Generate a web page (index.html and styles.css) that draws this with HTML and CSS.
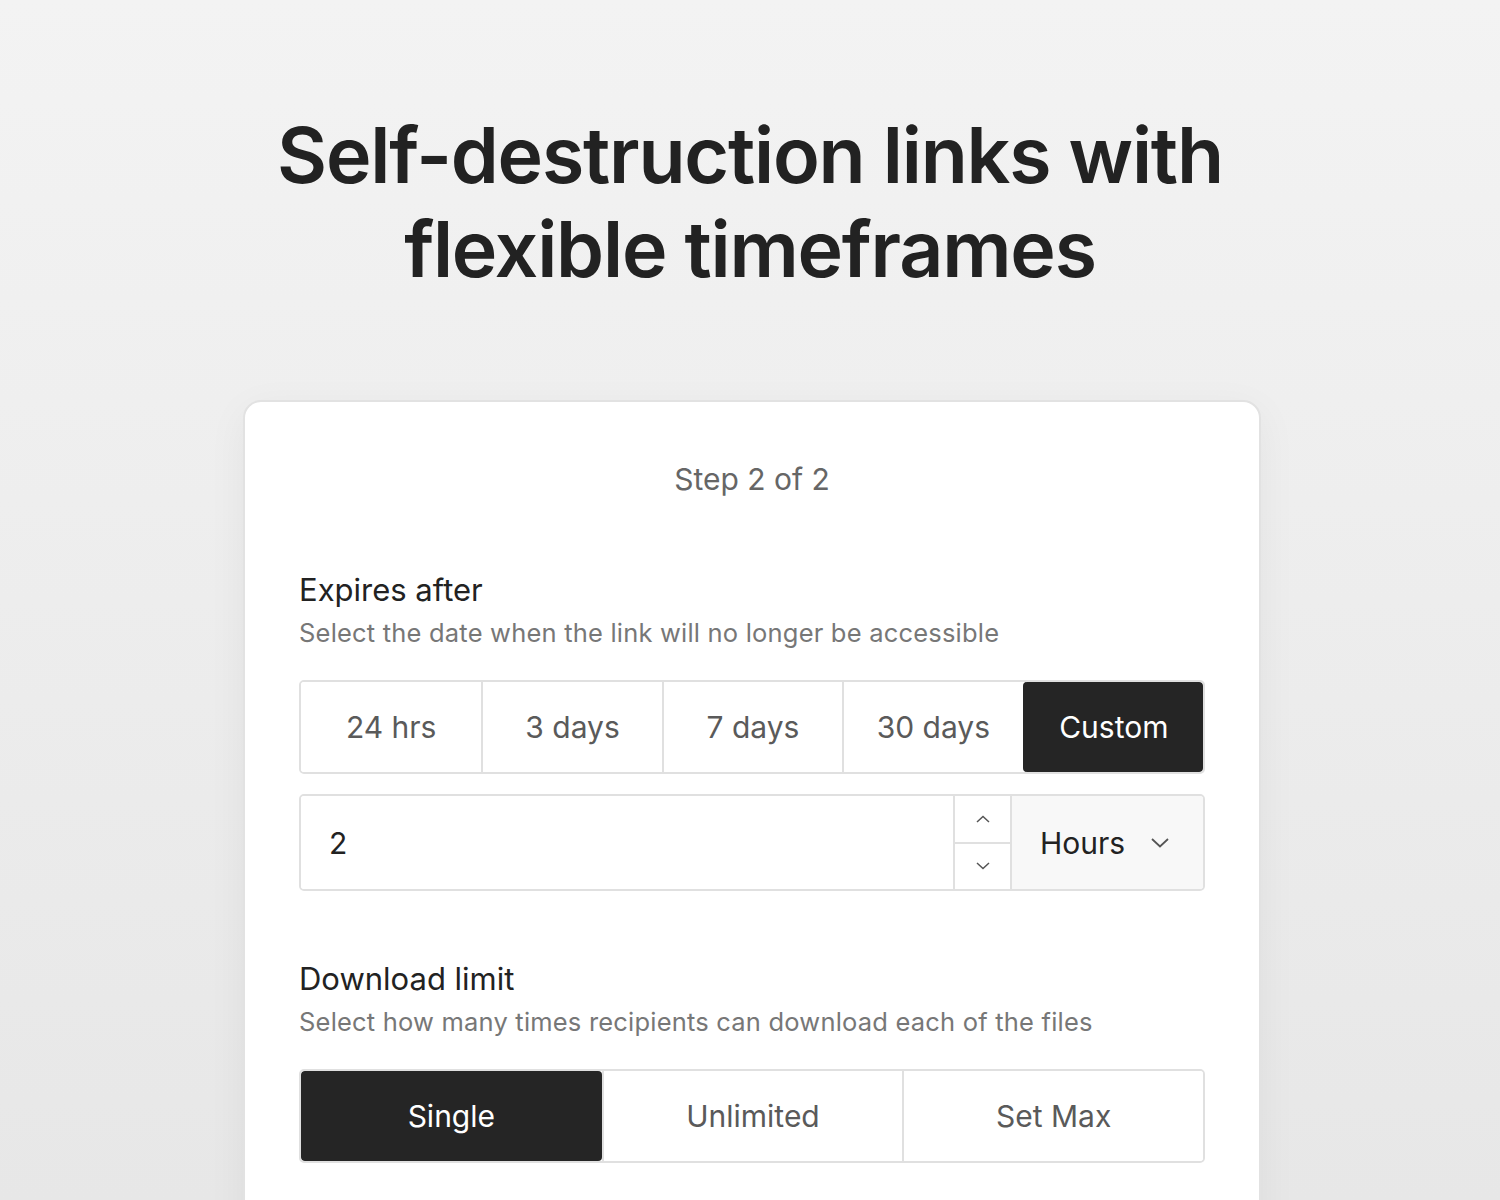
FILE: index.html
```html
<!DOCTYPE html>
<html lang="en">
<head>
  <meta charset="UTF-8" />
  <title>Self-destruction links</title>
  <meta name="viewport" content="width=device-width, initial-scale=1.0" />
  <link rel="stylesheet" href="styles.css">
</head>
<body>
  <h1 class="headline">Self-destruction links with<br>flexible timeframes</h1>

  <div class="card">
    <div class="step">Step 2 of 2</div>

    <div class="field">
      <div class="label">Expires after</div>
      <div class="hint">Select the date when the link will no longer be accessible</div>
      <div class="segments five">
        <button class="seg">24 hrs</button>
        <button class="seg">3 days</button>
        <button class="seg">7 days</button>
        <button class="seg">30 days</button>
        <button class="seg active">Custom</button>
      </div>
      <div class="custom-row">
        <input class="num" type="text" value="2" />
        <div class="spinner">
          <button class="spin">
            <svg width="14" height="8" viewBox="0 0 14 8"><path d="M1 7 L7 1.5 L13 7" fill="none" stroke="#555" stroke-width="1.5"/></svg>
          </button>
          <button class="spin">
            <svg width="14" height="8" viewBox="0 0 14 8"><path d="M1 1 L7 6.5 L13 1" fill="none" stroke="#555" stroke-width="1.5"/></svg>
          </button>
        </div>
        <div class="unit">
          <span>Hours</span>
          <svg width="18" height="10" viewBox="0 0 18 10"><path d="M1 1 L9 8.5 L17 1" fill="none" stroke="#555" stroke-width="1.8"/></svg>
        </div>
      </div>
    </div>

    <div class="field">
      <div class="label">Download limit</div>
      <div class="hint">Select how many times recipients can download each of the files</div>
      <div class="segments three">
        <button class="seg active">Single</button>
        <button class="seg">Unlimited</button>
        <button class="seg">Set Max</button>
      </div>
    </div>
  </div>
</body>
</html>
```

FILE: styles.css
```css
* { box-sizing: border-box; }
body { margin: 0; height: 1200px; overflow: hidden; font-family: Inter, "Noto Sans", sans-serif; background: linear-gradient(#f3f3f3, #e7e7e7); color: #222; }
.headline { margin: 0; padding-top: 108px; text-align: center; font-size: 77px; font-weight: 600; line-height: 94px; letter-spacing: -1.2px; color: #222; }
.card { width: 1018px; margin: 104px 0 0 243px; background: #fff; border: 2px solid #e2e2e2; border-radius: 18px; padding: 55px 54px 80px; box-shadow: 0 10px 40px rgba(0,0,0,0.05); }
.step { text-align: center; font-size: 30px; color: #666; line-height: 44px; margin-bottom: 69px; }
.field { margin-bottom: 68px; }
.label { font-size: 31px; color: #222; line-height: 40px; }
.hint { font-size: 25.5px; letter-spacing: 0.2px; color: #777; line-height: 34px; margin-top: 6px; margin-bottom: 30px; }
.segments { display: grid; border: 2px solid #e0e0e0; border-radius: 5px; height: 94px; overflow: hidden; }
.segments.five { grid-template-columns: repeat(5, 1fr); }
.segments.three { grid-template-columns: repeat(3, 1fr); }
.seg { font: inherit; font-size: 30px; color: #5a5a5a; background: #fff; border: none; border-left: 2px solid #e0e0e0; cursor: pointer; padding: 0; }
.seg:first-child { border-left: none; }
.seg.active { background: #252525; color: #fff; border-radius: 4px; border-left-color: #252525; }
.custom-row { display: flex; height: 97px; margin-top: 20px; border: 2px solid #e0e0e0; border-radius: 5px; overflow: hidden; }
.num { flex: 1; font: inherit; font-size: 30px; color: #222; border: none; padding: 0 28px; outline: none; }
.spinner { width: 57px; display: flex; flex-direction: column; border-left: 2px solid #e0e0e0; }
.spin { flex: 1; background: #fff; border: none; padding: 0; display: flex; align-items: center; justify-content: center; }
.spin + .spin { border-top: 2px solid #e0e0e0; }
.unit { width: 193px; background: #f8f8f8; border-left: 2px solid #e0e0e0; display: flex; align-items: center; padding-left: 28px; gap: 26px; font-size: 30px; color: #222; }
```
